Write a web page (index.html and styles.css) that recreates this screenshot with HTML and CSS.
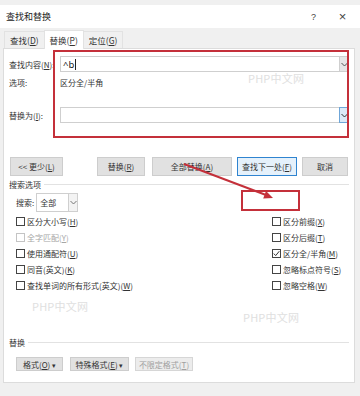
FILE: index.html
```html
<!DOCTYPE html>
<html lang="zh-CN">
<head>
    <meta charset="UTF-8">
    <meta name="viewport" content="width=device-width, initial-scale=1.0">
    <title>查找和替换</title>
    <link rel="stylesheet" href="styles.css">
</head>
<body>
    <div class="window">
        <div class="titlebar">
            <span class="title">查找和替换</span>
            <span class="tb-btn help">?</span>
            <span class="tb-btn close">×</span>
        </div>

        <div class="tabs">
            <span class="tab">查找(<u>D</u>)</span>
            <span class="tab active">替换(<u>P</u>)</span>
            <span class="tab">定位(<u>G</u>)</span>
        </div>

        <div class="panel">
            <div class="field-row find">
                <label>查找内容(<u>N</u>):</label>
                <div class="combo">
                    <span class="value">^b<i class="caret"></i></span>
                    <span class="arrow"><svg width="7" height="5" viewBox="0 0 7 5"><polyline points="0.5,1 3.5,4 6.5,1" fill="none" stroke="#555" stroke-width="1"/></svg></span>
                </div>
            </div>
            <div class="field-row options">
                <label>选项:</label>
                <span>区分全/半角</span>
            </div>
            <div class="field-row replace">
                <label>替换为(<u>I</u>):</label>
                <div class="combo">
                    <span class="value"></span>
                    <span class="arrow hot"><svg width="7" height="5" viewBox="0 0 7 5"><polyline points="0.5,1 3.5,4 6.5,1" fill="none" stroke="#333" stroke-width="1"/></svg></span>
                </div>
            </div>

            <div class="btn-row main">
                <button class="btn less">&lt;&lt; 更少(<u>L</u>)</button>
                <button class="btn replace-one">替换(<u>R</u>)</button>
                <button class="btn replace-all">全部替换(<u>A</u>)</button>
                <button class="btn find-next">查找下一处(<u>F</u>)</button>
                <button class="btn cancel">取消</button>
            </div>

            <div class="group-title search-title"><span>搜索选项</span></div>

            <div class="search-row">
                <span>搜索:</span>
                <div class="select">
                    <span class="value">全部</span>
                    <span class="arrow"><svg width="7" height="5" viewBox="0 0 7 5"><polyline points="0.5,1 3.5,4 6.5,1" fill="none" stroke="#777" stroke-width="1"/></svg></span>
                </div>
            </div>

            <div class="checks">
                <label class="check"><i class="box"></i>区分大小写(<u>H</u>)</label>
                <label class="check"><i class="box"></i>区分前缀(<u>X</u>)</label>
                <label class="check disabled"><i class="box"></i>全字匹配(<u>Y</u>)</label>
                <label class="check"><i class="box"></i>区分后缀(<u>T</u>)</label>
                <label class="check"><i class="box"></i>使用通配符(<u>U</u>)</label>
                <label class="check"><i class="box on"><svg width="7" height="7" viewBox="0 0 7 7"><polyline points="0.8,3.6 2.7,5.6 6.3,1.2" fill="none" stroke="#333" stroke-width="1"/></svg></i>区分全/半角(<u>M</u>)</label>
                <label class="check"><i class="box"></i>同音(英文)(<u>K</u>)</label>
                <label class="check"><i class="box"></i>忽略标点符号(<u>S</u>)</label>
                <label class="check"><i class="box"></i>查找单词的所有形式(英文)(<u>W</u>)</label>
                <label class="check"><i class="box"></i>忽略空格(<u>W</u>)</label>
            </div>

            <div class="group-title replace-title"><span>替换</span></div>

            <div class="btn-row format">
                <button class="btn fmt">格式(<u>O</u>) <span class="tri">▾</span></button>
                <button class="btn special">特殊格式(<u>E</u>) <span class="tri">▾</span></button>
                <button class="btn nofmt" disabled>不限定格式(<u>T</u>)</button>
            </div>
        </div>

        <span class="watermark wm1">PHP中文网</span>
        <span class="watermark wm2">PHP中文网</span>
        <span class="watermark wm3">PHP中文网</span>

        <!-- annotation marks drawn over the dialog -->
        <svg class="marks" width="360" height="396" viewBox="0 0 360 396">
            <rect x="54" y="51" width="294" height="86" fill="none" stroke="#c4303a" stroke-width="2"/>
            <rect x="242" y="191" width="57" height="19" fill="none" stroke="#c4303a" stroke-width="2"/>
            <line x1="184" y1="164" x2="266" y2="195" stroke="#c4303a" stroke-width="2"/>
            <polygon points="273,198 263.2,198.5 266,191.1" fill="#c4303a"/>
        </svg>
    </div>
</body>
</html>
```

FILE: styles.css
```css
body {
    margin: 0;
    background-color: #f0f0f0;
    font-family: "Noto Sans CJK SC", "Noto Sans", sans-serif;
    font-size: 8px;
    color: #333;
}
u {
    text-decoration: underline;
    text-underline-offset: 1px;
}
.window {
    position: relative;
    width: 360px;
    height: 396px;
    overflow: hidden;
    background-color: #f0f0f0;
}
.titlebar {
    display: flex;
    align-items: center;
    height: 23px;
    margin-top: 5px;
    padding-left: 6px;
    background-color: #fff;
}
.title {
    flex: 1;
    font-size: 9px;
    color: #222;
}
.tb-btn {
    width: 29px;
    text-align: center;
    font-family: "Liberation Sans", sans-serif;
    font-size: 10px;
    color: #444;
}
.tb-btn.help {
    font-size: 9px;
}
.tb-btn.close {
    font-size: 13px;
    margin-right: 3px;
}
.tabs {
    display: flex;
    align-items: flex-end;
    height: 20px;
    padding-left: 4px;
}
.tab {
    height: 16px;
    line-height: 16px;
    padding: 0 5px;
    border: 1px solid #e2e2e2;
    border-bottom: none;
    margin-right: -1px;
    font-size: 8.5px;
    color: #333;
}
.tab.active {
    height: 18px;
    line-height: 18px;
    background-color: #fff;
    position: relative;
    z-index: 1;
    margin-bottom: -1px;
}
.panel {
    width: 340px;
    height: 322px;
    margin-left: 3px;
    padding: 0 5px 11px 5px;
    background-color: #fff;
    border: 1px solid #dcdcdc;
}
.field-row {
    display: flex;
    align-items: center;
}
.field-row label {
    width: 51px;
    flex-shrink: 0;
}
.field-row.find {
    margin-top: 7px;
}
.field-row.options {
    height: 12px;
    margin-top: 4px;
}
.field-row.replace {
    margin-top: 19px;
}
.combo {
    flex: 1;
    display: flex;
    height: 16px;
    box-sizing: border-box;
    border: 1px solid #cfcfcf;
}
.combo .value {
    flex: 1;
    display: flex;
    align-items: center;
    padding-left: 2px;
    font-family: "Noto Sans", sans-serif;
    font-size: 9.5px;
    color: #222;
}
.caret {
    display: inline-block;
    width: 1px;
    height: 11px;
    margin-left: 1px;
    background-color: #222;
}
.arrow {
    display: flex;
    align-items: center;
    justify-content: center;
    width: 8px;
    background-color: #e6e6e6;
    border-left: 1px solid #cfcfcf;
}
.arrow.hot {
    background-color: #dbe9f7;
    border: 1px solid #6fa6d8;
    margin: -1px -1px -1px 0;
}
.btn-row {
    display: flex;
}
.btn {
    box-sizing: border-box;
    padding: 0;
    background-color: #e1e1e1;
    border: 1px solid #cdcdcd;
    font-family: inherit;
    font-size: 8px;
    color: #333;
}
.btn-row.main {
    height: 19px;
    margin-top: 34px;
}
.btn.less {
    width: 53px;
    margin-left: 1px;
}
.btn.replace-one {
    width: 48px;
    margin-left: 34px;
}
.btn.replace-all {
    width: 80px;
    margin-left: 7px;
}
.btn.find-next {
    width: 60px;
    margin-left: 5px;
    background-color: #e5f1fb;
    border: 1px solid #2f84d0;
}
.btn.cancel {
    width: 46px;
    margin-left: 5px;
}
.group-title {
    display: flex;
    align-items: center;
    height: 10px;
}
.group-title::after {
    content: "";
    flex: 1;
    height: 1px;
    margin-left: 3px;
    background-color: #e2e2e2;
}
.search-title {
    margin-top: 3px;
}
.replace-title {
    margin-top: 44px;
}
.search-row {
    display: flex;
    align-items: center;
    margin-top: 4px;
    padding-left: 7px;
}
.select {
    display: flex;
    width: 42px;
    height: 19px;
    margin-left: 2px;
    box-sizing: border-box;
    border: 1px solid #cfcfcf;
}
.select .value {
    flex: 1;
    display: flex;
    align-items: center;
    padding-left: 3px;
}
.select .arrow {
    background-color: #f3f3f3;
}
.checks {
    display: grid;
    grid-template-columns: 256px 1fr;
    grid-auto-rows: 16px;
    margin-top: 1px;
    padding-left: 7px;
}
.check {
    display: flex;
    align-items: center;
    white-space: nowrap;
}
.box {
    display: flex;
    align-items: center;
    justify-content: center;
    width: 9px;
    height: 9px;
    box-sizing: border-box;
    margin-right: 2px;
    border: 1px solid #444;
}
.check.disabled {
    color: #a6a6a6;
}
.check.disabled .box {
    border-color: #c4c4c4;
}
.btn-row.format {
    height: 14px;
    margin-top: 10px;
    padding-left: 7px;
}
.btn.fmt {
    width: 47px;
}
.btn.special {
    width: 59px;
    margin-left: 7px;
}
.btn.nofmt {
    width: 58px;
    margin-left: 6px;
    color: #a0a0a0;
    background-color: #ececec;
    border-color: #d6d6d6;
}
.tri {
    font-size: 7px;
}
.watermark {
    position: absolute;
    font-size: 11px;
    color: #e0e0e0;
    font-family: "Noto Sans CJK SC", sans-serif;
    letter-spacing: 0.2px;
}
.wm1 {
    left: 248px;
    top: 70px;
}
.wm2 {
    left: 32px;
    top: 298px;
}
.wm3 {
    left: 243px;
    top: 309px;
}
.marks {
    position: absolute;
    left: 0;
    top: 0;
    pointer-events: none;
}
```
